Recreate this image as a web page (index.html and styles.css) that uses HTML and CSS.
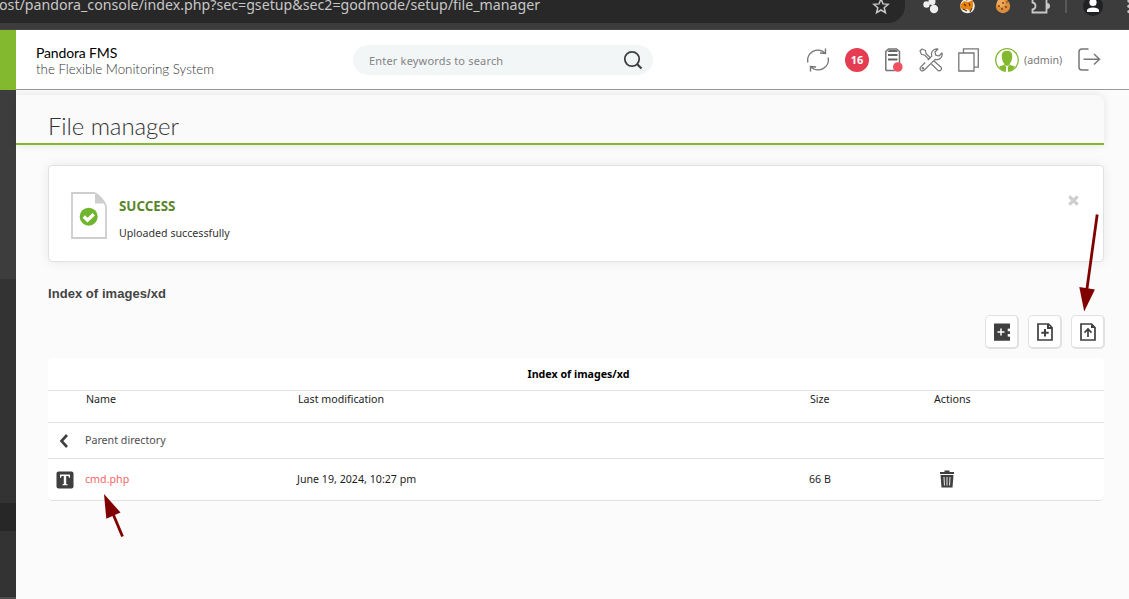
FILE: index.html
```html
<!DOCTYPE html>
<html lang="en">
<head>
<meta charset="utf-8">
<title>Pandora FMS - File manager</title>
<link rel="stylesheet" href="styles.css">
</head>
<body>
<div class="browser">
  <div class="address"><span class="url">ost/pandora_console/index.php?sec=gsetup&amp;sec2=godmode/setup/file_manager</span></div>
  <svg class="browser-icons" width="269" height="29" viewBox="860 0 269 29">
    <path d="M881 -1l2 4.900 5.100.4-3.900 3.400 1.200 5-4.400-2.700-4.400 2.700 1.200-5-3.900-3.400 5.100-.4z" fill="none" stroke="#c7c7c7" stroke-width="1.500"/>
    <g fill="#eee"><circle cx="926.500" cy="4.500" r="3.200"/><circle cx="932" cy="1.500" r="3.500"/><circle cx="934" cy="9" r="4.200"/></g>
    <circle cx="967.500" cy="6" r="7.300" fill="#eee"/>
    <path d="M961 4l3-3 4 1 5-2v7l-3 4-3-2-4 1-3-3z" fill="#e8830c"/>
    <path d="M964 4l2 2M969 3l1 3M963 9l4 2M972 8l-2 4M966 0l5-1" stroke="#5b3510" stroke-width="1.100"/>
    <circle cx="1003" cy="6" r="7.200" fill="#dd8e3c"/>
    <circle cx="1001" cy="3" r="4" fill="#edaa5c"/>
    <g fill="#784018"><circle cx="999" cy="6" r="1"/><circle cx="1003" cy="3" r="1"/><circle cx="1006" cy="7" r="1"/><circle cx="1002" cy="9" r="1"/><circle cx="1007" cy="2" r=".8"/></g>
    <path d="M1032.500 -1v3.500q3 .5 3 3.500t-3 3.500v3h14V8.500V-1" fill="none" stroke="#c7c7c7" stroke-width="1.800"/><path d="M1047 3a3 3 0 0 1 0 6z" fill="#c7c7c7"/>
    <path d="M1066 0v13" stroke="#636363" stroke-width="1.500"/>
    <circle cx="1093" cy="6" r="10" fill="#202124"/>
    <circle cx="1093" cy="2.500" r="3.600" fill="#fff"/><path d="M1087 12v-2q1-2.500 6-2.500t6 2.500v2z" fill="#fff"/>
    <g fill="#c7c7c7"><circle cx="1129" cy="1" r="1.700"/><circle cx="1129" cy="6.300" r="1.700"/><circle cx="1129" cy="11.600" r="1.700"/></g>
  </svg>
</div>
<div class="app">
  <aside class="sidebar"><i class="side-logo"></i><i class="side-top"></i><i class="side-mid"></i><i class="side-active"></i><i class="side-rest"></i><i class="side-foot"></i></aside>
  <div class="page">
    <header class="header">
      <div class="brand"><b>Pandora FMS</b><span>the Flexible Monitoring System</span></div>
      <div class="search"><span>Enter keywords to search</span>
        <svg width="20" height="20" viewBox="0 0 20 20" fill="none" stroke="#3f3f3f"><circle cx="9" cy="9" r="7.200" stroke-width="1.800"/><path d="M14 14l4.500 4.500" stroke-width="2.200"/></svg>
      </div>
      <div class="tools">
        <svg class="t-refresh" width="24" height="26" viewBox="0 0 24 26" fill="none" stroke="#777" stroke-width="1.400"><path d="M1.800 15.500A10.300 10.300 0 0 1 19 6M19.500 1.500v5l-5.500-.5M22.200 10.500A10.300 10.300 0 0 1 5 20M4.500 24.500v-5l5.500.5"/></svg>
        <span class="alerts">16</span>
        <svg class="t-server" width="18" height="24" viewBox="0 0 18 24"><path d="M.8 22.500V3.500L3.500 1h8L14.500 3.500v12M.8 22.500h9" fill="none" stroke="#737373" stroke-width="1.500"/><path d="M2.500 4L4 2h7.500l1.500 2z" fill="#666"/><path d="M3 7h9.500M3 11.500h9.500" stroke="#666" stroke-width="1.800"/><circle cx="12.800" cy="19" r="4.800" fill="#ef5060"/></svg>
        <svg class="t-wrench" width="24" height="24" viewBox="0 0 24 24" fill="none" stroke="#777" stroke-width="1.200" stroke-linejoin="round"><path d="M8.800 12.200l4-4Q11.500 3.500 15 1.700 17 .6 19 1l-3 3 .7 3.200L20 8l3-3q.7 3-1.500 5.200-2.300 2-5.300 1.200L5.300 22Q3.500 23.800 1.800 22.200.2 20.500 2 18.700l4.200-4.200"/><path d="M1 3l2-2 3.500 1.500.5 3 4.200 4.200-1.500 1.500L5.500 7l-3-.5zM15 13l7 6.200q1.200 1.500-.3 3-1.500 1.300-3 0L12.500 16"/><circle cx="3.900" cy="20.200" r=".7"/></svg>
        <svg class="t-copy" width="22" height="24" viewBox="0 0 22 24" fill="none" stroke="#777" stroke-width="1.300"><path d="M5.500 5V.8h14.800v18.400H16"/><path d="M.8 5H16v18H.8z"/></svg>
        <svg class="t-user" width="24" height="24" viewBox="0 0 24 24"><circle cx="12" cy="12" r="11.300" fill="#fff" stroke="#82b92e" stroke-width="1.300"/><path d="M12 2.700c4 0 5.500 2.800 5.200 6.300-.2 4-1.600 5.700-2.700 7 .2 1.500 4 1.500 5.400 2.800A11.300 11.300 0 0 1 12 23.500a11.300 11.300 0 0 1-7.900-4.700C5.500 17.500 9.300 17.500 9.500 16 8.400 14.700 7 13 6.800 9 6.500 5.500 8 2.700 12 2.700z" fill="#82b92e"/><path d="M9.500 17l1.800 2-.5 5h2.400l-.5-5 1.800-2-2.500 1z" fill="#fff"/></svg>
        <span class="admin">(admin)</span>
        <svg class="t-exit" width="23" height="23" viewBox="0 0 23 23" fill="none" stroke="#777" stroke-width="1.500"><path d="M10.500 1H4Q1 1 1 4v15q0 3 3 3h6.500M5.500 11.200H21M16 6l5.500 5.200L16 16.500"/></svg>
      </div>
    </header>
    <main class="main">
      <h1 class="title">File manager</h1>
      <section class="notice">
        <svg class="n-icon" width="36" height="47" viewBox="0 0 36 47"><path d="M1 1h22.500q3 1 6.500 5t5 8v32H1z" fill="#fff" stroke="#cecece" stroke-width="1.800"/><path d="M24 1v10.500h10.500Q30 4 24 1z" fill="#cecece"/><circle cx="17.700" cy="24.700" r="9" fill="#70b52f"/><path d="M12.800 24.500l3.700 3.700 6.200-6" fill="none" stroke="#fff" stroke-width="3.400"/></svg>
        <div class="n-text"><b>SUCCESS</b><span>Uploaded successfully</span></div>
        <svg class="n-close" width="11" height="11" viewBox="0 0 11 11"><path d="M1.300 1.300l8.400 8.400M9.700 1.300L1.300 9.700" stroke="#cfcfcf" stroke-width="3.300"/></svg>
      </section>
      <h2 class="index">Index of images/xd</h2>
      <div class="buttons">
        <button class="btn"><svg width="18" height="18" viewBox="0 0 18 18"><path d="M1 .5h16v5l-2.300.3v2.500H17V11h-2.300v2.500l2.300.3v4H1z" fill="#3f3f3f"/><path d="M8 5.500v7M4.500 9h7" stroke="#fff" stroke-width="1.500"/></svg></button>
        <button class="btn"><svg width="18" height="18" viewBox="0 0 18 18"><path d="M2 1h10.500L16 4.500V17H2z" fill="none" stroke="#3f3f3f" stroke-width="1.700"/><path d="M12 1v4h4M9 6v7.500M5.300 9.700h7.400" fill="none" stroke="#3f3f3f" stroke-width="2"/></svg></button>
        <button class="btn"><svg width="18" height="18" viewBox="0 0 18 18"><path d="M2 1h10.500L16 4.500V17H2z" fill="none" stroke="#3f3f3f" stroke-width="1.700"/><path d="M12 1v4h4z" fill="#3f3f3f"/><path d="M9 14V6.300M5.500 9.700L9 6l3.500 3.700" fill="none" stroke="#3f3f3f" stroke-width="1.700"/></svg></button>
      </div>
      <div class="table">
        <div class="caption">Index of images/xd</div>
        <div class="row head"><span></span><span>Name</span><span>Last modification</span><span>Size</span><span>Actions</span></div>
        <div class="row parent"><svg width="10" height="14" viewBox="0 0 10 14"><path d="M8 1L2.500 7 8 13" fill="none" stroke="#3f3f3f" stroke-width="2.600"/></svg><span>Parent directory</span></div>
        <div class="row file"><svg width="18" height="18" viewBox="0 0 18 18"><rect x=".5" y=".5" width="17" height="17" rx="2" fill="#3f3f3f"/><path d="M4 3.500h10v3.200h-1L12.300 5h-2.100v8l1.500.5v.8H6.300v-.8l1.500-.5V5H5.700L5 6.700H4z" fill="#fff"/></svg><span class="link">cmd.php</span><span>June 19, 2024, 10:27 pm</span><span>66 B</span>
          <svg class="trash" width="14" height="18" viewBox="0 0 14 18"><path d="M0 2h4.500V.6h5V2H14v2H0zM.5 5h13l-1 12.500h-11z" fill="#3f3f3f"/><path d="M4 7l.5 8.500M7 7v8.500M10 7l-.5 8.500" stroke="#ddd" stroke-width="1.100"/></svg></div>
      </div>
    </main>
  </div>
</div>
<svg class="arrows" width="1129" height="599" viewBox="0 0 1129 599" fill="#800000"><path d="M1097.200 214.500L1086.800 290" stroke="#800000" stroke-width="2.800"/><path d="M1079.300 287l15.600 2.500L1084.200 311.500z"/><path d="M122.500 536.500L113.500 515" stroke="#800000" stroke-width="2.800"/><path d="M104 494l16.500 18.500-14.200 6.300z"/></svg>
</body>
</html>
```
FILE: styles.css
```css
* { box-sizing: border-box; }
body { margin: 0; height: 599px; overflow: hidden; background: #fbfbfb; font-family: "Noto Sans", sans-serif; font-size: 10.67px; color: #333; }
svg { display: block; flex: none; }
.browser { height: 30px; background: #3c3c3c; border-bottom: 1px solid #484448; display: flex; position: relative; }
.address { width: 905px; height: 23px; background: #282828; border-radius: 0 0 17px 0; }
.url { display: block; margin: -5px 0 0 -1px; font-size: 14.2px; line-height: 20px; color: #c7c7c7; white-space: nowrap; }
.browser-icons { position: absolute; right: 0; top: 0; }
.app { display: flex; height: 569px; }
.sidebar { width: 16px; display: flex; flex-direction: column; background: #333; }
.side-logo { height: 60px; background: #82b92e; }
.side-top { height: 189px; background: #3d3d3d; }
.side-mid { height: 224px; }
.side-active { height: 28px; background: #272727; }
.side-rest { height: 66px; }
.side-foot { height: 2px; background: #4d4d4d; }
.page { flex: 1; }
.header { height: 60px; background: #fff; border-bottom: 1px solid #9a9a9a; display: flex; }
.brand { width: 337px; padding: 14px 0 0 20px; font-family: Lato, sans-serif; font-size: 13.33px; line-height: 16px; display: flex; flex-direction: column; color: #343434; font-weight: 300; }
.brand b { font-size: 14px; letter-spacing: -.15px; line-height: 17px; font-weight: 400; color: #000; }
.search { width: 300px; height: 30px; margin-top: 15px; border-radius: 15px; background: #f2f6f7; display: flex; align-items: center; justify-content: space-between; padding: 0 10px 0 16px; font-size: 11px; letter-spacing: .18px; color: #848484; }
.tools { display: flex; padding-top: 17px; margin-left: 153px; }
.alerts { width: 24px; height: 24px; margin: 1px 0 0 15px; border-radius: 50%; background: #e63c52; color: #fff; font: bold 11px/24px "Noto Sans", sans-serif; text-align: center; }
.t-server { margin: 1px 0 0 16px; }
.t-wrench { margin: 1px 0 0 16px; }
.t-copy { margin: 1px 0 0 15px; }
.t-user { margin: 1px 0 0 15px; }
.admin { margin: 5px 0 0 5px; width: 40px; font-size: 10.67px; line-height: 16px; color: #777; }
.t-exit { margin: 1px 0 0 14px; }
.main { padding: 5px 25px 0 0; }
.title { margin: 0; height: 50px; padding: 16px 0 0 32px; border-bottom: 2px solid #82b92e; border-radius: 0 8px 0 0; background: #fafafa; box-shadow: 0 0 8px rgba(0,0,0,.1); font: 300 24px/29px Lato, sans-serif; letter-spacing: -.1px; color: #343434; }
.notice { margin: 20px 0 0 32px; height: 97px; border: 1px solid #e1e1e1; border-radius: 4px; background: #fff; box-shadow: 0 0 12px rgba(0,0,0,.08); display: flex; }
.n-icon { margin: 26px 12px 0 22px; }
.n-text { display: flex; flex-direction: column; flex: 1; padding-top: 30px; }
.n-text b { font-size: 13.33px; line-height: 20px; color: #5a8629; }
.n-text span { margin-top: 9px; line-height: 16px; }
.n-close { margin: 29px 24px 0 0; }
.index { margin: 24px 0 0 32px; font: bold 13px/16px "Liberation Sans", Arial, sans-serif; letter-spacing: .05px; color: #444; }
.buttons { display: flex; justify-content: flex-end; gap: 9px; margin: 13px -1px 0 0; }
.btn { width: 34px; height: 34px; padding: 0; border: 1px solid #e1e1e1; border-bottom-width: 2px; border-right-width: 2px; border-radius: 5px; background: #fff; display: flex; align-items: center; justify-content: center; }
.table { margin: 9px 0 0 32px; border-radius: 5px; background: #fff; border-bottom: 1px solid #e1e1e1; color: #1d1d1d; }
.caption { height: 33px; border-bottom: 1px solid #e1e1e1; color: #000; font-weight: bold; line-height: 32px; text-align: center; padding-left: 5px; }
.row { display: grid; grid-template-columns: 37px 212px 512px 124px 1fr; border-bottom: 1px solid #e1e1e1; line-height: 16px; }
.head { height: 32px; }
.head span { padding-left: 1px; }
.parent { height: 36px; align-items: center; color: #4d4d4d; }
.parent span, .file span { margin-top: -2px; }
.parent svg { margin-left: 11px; }
.file { height: 41px; border: 0; align-items: center; }
.file svg { margin-left: 8px; margin-top: 1px; }
.file .trash { margin: -2px 0 0 7px; }
.file .link { color: #fa6468; }
.arrows { position: absolute; left: 0; top: 0; pointer-events: none; }
```
